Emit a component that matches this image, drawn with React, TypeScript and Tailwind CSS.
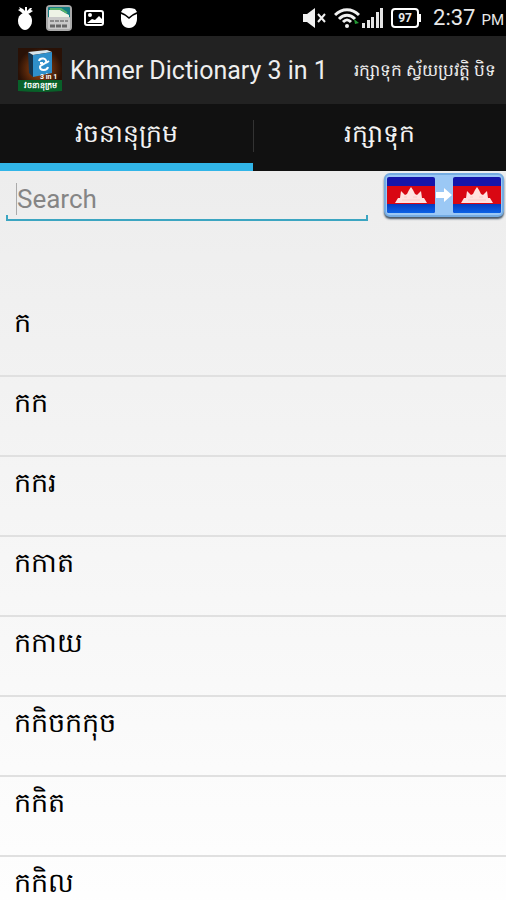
import { useState } from 'react';

const WORDS = ['ក', 'កក', 'កករ', 'កកាត', 'កកាយ', 'កកិចកកុច', 'កកិត', 'កកិល'];

const TABS = [
  { id: 'dictionary', label: 'វចនានុក្រម' },
  { id: 'saved', label: 'រក្សាទុក' },
];

function StatusBar() {
  return (
    <div className="flex h-9 items-center justify-between bg-black pl-[17px] pr-0.5 text-[#e8e8e8]">
      <div className="flex items-center gap-3">
        <svg width="17" height="24" viewBox="0 0 17 24" fill="#fff">
          <path d="M6 8 4 6 1 4l2-1-1-2 4 2 2 2V1h2v4l3-3h2l-1 2 2 1-3 2-2 1z" />
          <path d="M8 7c4 0 7 3 7 8 0 4-2 6-4 8q-3 2-6 0c-2-2-4-4-4-8 0-5 3-8 7-8z" />
        </svg>
        <svg width="26" height="26" viewBox="0 0 26 26">
          <rect width="26" height="26" rx="4" fill="#a9a9a9" />
          <rect x="2" y="2" width="22" height="11" rx="1" fill="#147d84" />
          <path d="M3 5h11l9 5v3H3z" fill="#eef3e6" />
          <path d="M4 4h11l6 4" stroke="#58b36a" strokeWidth="2" fill="none" />
          <rect x="2" y="12" width="22" height="12" rx="1" fill="#c9c9c9" />
          <path d="M4 16h18" stroke="#8a8a8a" strokeWidth="2" strokeDasharray="4 1" />
          <path d="M4 21h18" stroke="#666" strokeWidth="3" strokeDasharray="5 1" />
        </svg>
        <svg width="20" height="16" viewBox="0 0 20 16" fill="none" stroke="#fff" strokeWidth="2">
          <rect x="1" y="1" width="18" height="14" rx="2" />
          <circle cx="6" cy="5" r="1" fill="#fff" />
          <path d="m3 13 5-4 3 1 4-4 3 3v4z" fill="#fff" stroke="none" />
        </svg>
        <svg className="ml-1" width="18" height="20" viewBox="0 0 18 20" fill="#fff">
          <path d="M3 1q6-2 12 0l2 3-4 2-4 3-4-3-4-2z" />
          <path d="M1 6q4 1 8 5 4-4 8-5v5q0 5-4 8-4 2-8 0-4-3-4-8z" />
        </svg>
      </div>
      <div className="flex items-center">
        <svg className="mr-2" width="23" height="20" viewBox="0 0 23 20">
          <path d="M0 6h4l8-6v20l-8-6H0z" fill="#f1f1f1" />
          <path d="m15 6 7 8m0-8-7 8" stroke="#f1f1f1" strokeWidth="2" />
        </svg>
        <svg width="26" height="20" viewBox="0 0 26 20" fill="none" stroke="#f1f1f1" strokeWidth="3">
          <path d="M1 7c7-7 17-7 24 0M5 11c5-5 11-5 16 0" />
          <path d="M9 14c3-3 5-3 8 0" />
          <circle cx="13" cy="18" r="2" fill="#f1f1f1" stroke="none" />
          <path d="m20 11 5 4-4 1z" fill="#249b35" stroke="none" />
        </svg>
        <svg className="ml-0.5 mr-2" width="21" height="20" viewBox="0 0 21 20" fill="#e4e4e4">
          <path d="M0 15h3v5H0zM5 12h3v8H5zM9 9h3v11H9zM14 4h3v16h-3zM18 0h3v20h-3z" />
        </svg>
        <div className="flex items-center">
          <span className="flex h-5 w-7 items-center justify-center rounded-sm border-2 border-white text-xs font-bold leading-3">97</span>
          <span className="h-2 w-0.5 bg-white" />
        </div>
        <span className="ml-3 flex items-baseline gap-1.5 whitespace-nowrap pt-0.5 text-[22px] leading-9">
          2:37 <span className="text-[15px]">PM</span>
        </span>
      </div>
    </div>
  );
}

function AppLogo() {
  return (
    <svg className="shrink-0" width="44" height="44" viewBox="0 0 44 44">
      <defs>
        <radialGradient id="logo-glow">
          <stop stopColor="#a94d12" />
          <stop offset="1" stopColor="#291106" />
        </radialGradient>
      </defs>
      <rect width="44" height="42" fill="url(#logo-glow)" />
      <path d="m10 4 5 3v22l-4-4z" fill="#14344f" />
      <path d="M10 4 29 2l5 2-19 3z" fill="#d7e5ed" />
      <path d="m15 7 19-3v21l-19 4z" fill="#2f8fcb" />
      <path d="M21 13c1-4 8-3 7 1-1 3-6 2-6 5 0 4 7 4 8 0M22 15h3m3 0 3-2" fill="none" stroke="#fff" strokeWidth="2" />
      <path d="M0 32h44v11q-22 2-44 0z" fill="#086129" />
      <text x="22" y="31" fill="#fff" fontSize="7" fontWeight="700">3 in 1</text>
      <text x="22" y="40" fill="#fff" fontSize="8" fontWeight="700" textAnchor="middle">វចនានុក្រម</text>
    </svg>
  );
}

function Flag() {
  return (
    <svg width="48" height="36" viewBox="0 0 48 36">
      <defs>
        <linearGradient id="flag-blue" x2="0" y2="1">
          <stop stopColor="#0636b8" />
          <stop offset="1" stopColor="#0a62e6" />
        </linearGradient>
      </defs>
      <rect width="48" height="36" rx="2" fill="#1515aa" />
      <path d="M0 26h48v8q0 2-2 2H2q-2 0-2-2z" fill="url(#flag-blue)" />
      <path d="M0 9h48v18H0z" fill="#d90712" />
      <path d="m8 26 3-5h2l1-7 2 2 2 2 2-1 2-4 2-3 2 3 2 4 2 1 2-2 2-2 1 7h2l3 5z" fill="#ffe1df" />
      <path d="M15 23h18M17 20h3m6 0h4" stroke="#f8cbc8" />
    </svg>
  );
}

export default function App() {
  const [tab, setTab] = useState('dictionary');
  const [query, setQuery] = useState('');
  const words = WORDS.filter((word) => word.startsWith(query));

  return (
    <div className="min-h-screen bg-linear-to-b from-[#e9e9e9] to-white font-[Roboto,sans-serif] text-black">
      <StatusBar />

      <header className="flex h-[68px] items-center bg-[#222] pl-[18px] pr-2.5 text-[#eee]">
        <AppLogo />
        <h1 className="ml-2 whitespace-nowrap pt-0.5 text-[25px] leading-8">Khmer Dictionary 3 in 1</h1>
        <button type="button" className="ml-auto whitespace-nowrap text-[17px] font-medium leading-8">រក្សាទុក ស្វ័យប្រវត្តិ បិទ</button>
      </header>

      <nav className="flex h-[67px] bg-[#111]">
        {TABS.map((item) => (
          <button
            key={item.id}
            type="button"
            onClick={() => setTab(item.id)}
            className={`relative flex flex-1 justify-center border-b-8 pt-3 text-[25px] font-medium leading-9 text-[#f3f3f3] ${
              tab === item.id ? 'border-[#31b5e8]' : 'border-[#111]'
            }`}
          >
            {item.label}
            {item.id === 'saved' && <span className="absolute left-0 top-4 h-8 w-px bg-[#333]" />}
          </button>
        ))}
      </nav>

      <div className="flex h-[54px] items-start">
        <div className="ml-1.5 mr-4 flex-1">
          <div className="flex h-11 items-center pl-2.5 pt-3">
            <span className="h-8 w-px bg-[#aaa]" />
            <input
              type="text"
              aria-label="Search"
              value={query}
              onChange={(e) => setQuery(e.target.value)}
              placeholder="Search"
              className="h-8 w-full text-[26px] leading-8 outline-none placeholder:text-[#858585]"
            />
          </div>
          <div className="h-1.5 border-x-2 border-b-2 border-[#3ba5c1]" />
        </div>
        <button
          type="button"
          aria-label="Khmer to Khmer"
          className="mr-0.5 mt-0.5 flex h-11 w-[120px] items-center justify-between rounded-md border-2 border-[#75ace2] bg-[#9bc8f5] px-px shadow-[0_2px_2px_#456]"
        >
          <Flag />
          <svg className="shrink-0" width="16" height="14" viewBox="0 0 16 14">
            <path d="M0 4h8V0l8 7-8 7v-4H0z" fill="#fff" />
          </svg>
          <Flag />
        </button>
      </div>

      <ul className="mt-[72px]">
        {words.map((word) => (
          <li key={word} className="h-20 border-b-2 border-[#e0e0e0] px-3.5 pt-2 text-[27px] leading-9">
            {word}
          </li>
        ))}
      </ul>
    </div>
  );
}
